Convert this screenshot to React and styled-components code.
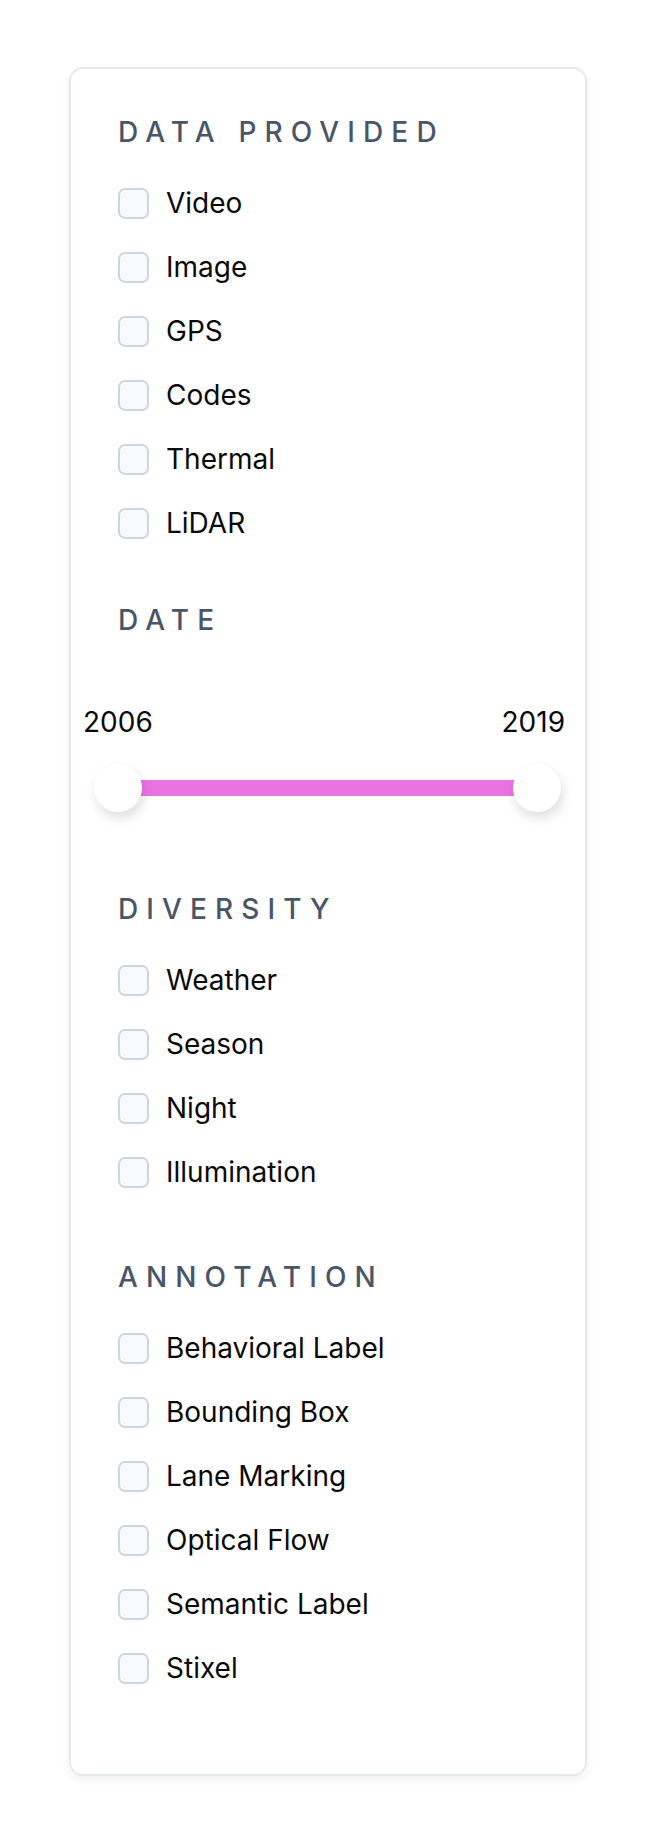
import { createGlobalStyle, styled } from "styled-components";

const GlobalStyle = createGlobalStyle`
    body {
        margin: 0;
        background: #ffffff;
        font-family: Inter, "Noto Sans", sans-serif;
        color: #0a0a0a;
    }
`

const dataProvided = ["Video", "Image", "GPS", "Codes", "Thermal", "LiDAR"]
const diversity = ["Weather", "Season", "Night", "Illumination"]
const annotation = ["Behavioral Label", "Bounding Box", "Lane Marking", "Optical Flow", "Semantic Label", "Stixel"]

function CheckList({ items }) {
    return (
        <StyledList>
            {items.map((item) => (
                <StyledRow key={item}>
                    <StyledCheckbox type="checkbox" name={item} />
                    <span>{item}</span>
                </StyledRow>
            ))}
        </StyledList>
    )
}

export default function App() {
    return (
        <StyledPage>
            <GlobalStyle />
            <StyledCard>
                <StyledSection>
                    <StyledHeading>Data Provided</StyledHeading>
                    <CheckList items={dataProvided} />
                </StyledSection>

                <StyledSection $top={57}>
                    <StyledHeading $mb={62}>Date</StyledHeading>
                    <StyledYears>
                        <span>2006</span>
                        <span>2019</span>
                    </StyledYears>
                    <StyledSlider>
                        <StyledTrack />
                        <StyledThumb $side="left" />
                        <StyledThumb $side="right" />
                    </StyledSlider>
                </StyledSection>

                <StyledSection $top={77}>
                    <StyledHeading>Diversity</StyledHeading>
                    <CheckList items={diversity} />
                </StyledSection>

                <StyledSection $top={65}>
                    <StyledHeading>Annotation</StyledHeading>
                    <CheckList items={annotation} />
                </StyledSection>
            </StyledCard>
        </StyledPage>
    )
}

const StyledPage = styled.div`
    padding: 67px 0 68px;
`

const StyledCard = styled.div`
    width: 518px;
    box-sizing: border-box;
    margin: 0 auto;
    padding: 43px 48px 86px 47px;
    border: 2px solid #e5e9f1;
    border-radius: 14px;
    background: #ffffff;
    box-shadow: 0 4px 10px rgba(30, 41, 59, 0.06);
`

const StyledSection = styled.section`
    display: flex;
    flex-direction: column;
    margin-top: ${(props) => props.$top || 0}px;
`

const StyledHeading = styled.h3`
    margin: 0 0 ${(props) => props.$mb || 31}px;
    font-size: 28px;
    line-height: 40px;
    font-weight: 500;
    letter-spacing: 0.29em;
    text-transform: uppercase;
    color: #4a5568;
`

const StyledList = styled.div`
    display: flex;
    flex-direction: column;
    gap: 24px;
`

const StyledRow = styled.label`
    display: flex;
    align-items: center;
    gap: 17px;
    height: 40px;
    font-size: 28px;
    line-height: 40px;
    color: #0a0a0a;
`

const StyledCheckbox = styled.input`
    appearance: none;
    margin: 0;
    width: 31px;
    height: 31px;
    box-sizing: border-box;
    border: 2px solid #cbd6e4;
    border-radius: 7px;
    background: #f7f9fb;
`

const StyledYears = styled.div`
    display: flex;
    justify-content: space-between;
    margin: 0 -28px 22px -35px;
    font-size: 28px;
    line-height: 40px;
    color: #0a0a0a;
`

const StyledSlider = styled.div`
    position: relative;
    height: 48px;
    display: flex;
    align-items: center;
`

const StyledTrack = styled.div`
    width: 100%;
    height: 16px;
    background: #eb73e1;
`

const StyledThumb = styled.div`
    position: absolute;
    top: 0;
    ${(props) => (props.$side === "left" ? "left: -24px;" : "right: -24px;")}
    width: 48px;
    height: 48px;
    border-radius: 50%;
    background: #ffffff;
    box-shadow: 2px 6px 12px rgba(0, 0, 0, 0.13);
`
